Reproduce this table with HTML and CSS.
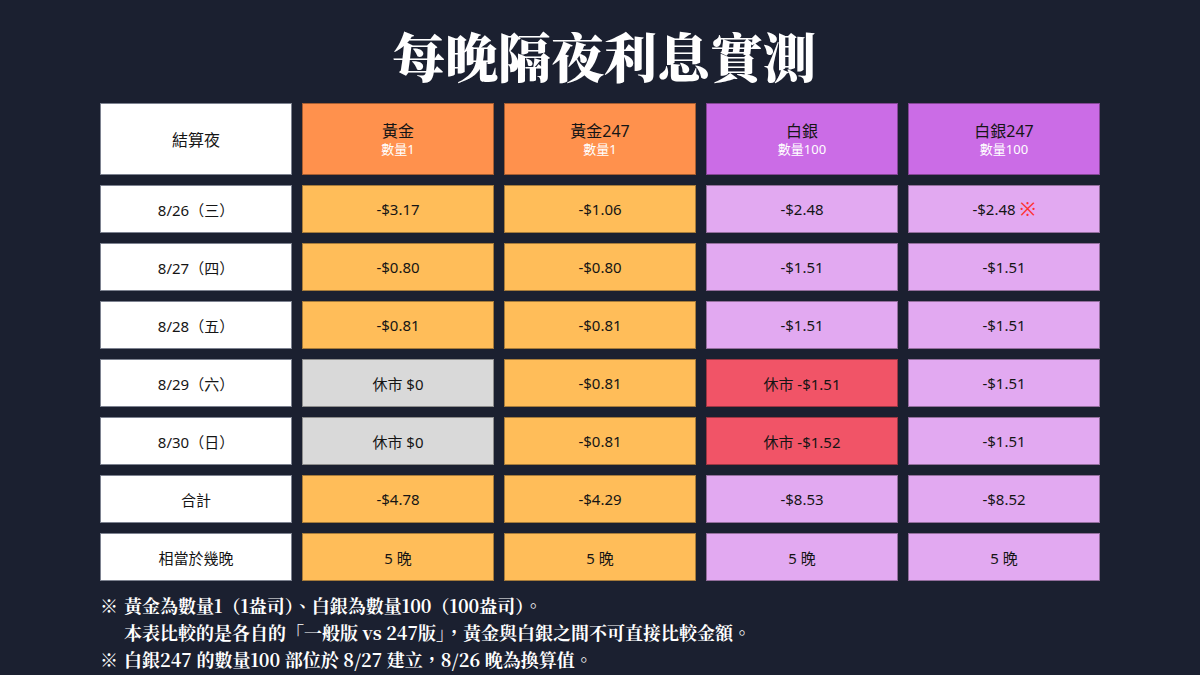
FILE: index.html
```html
<!DOCTYPE html>
<html lang="zh-Hant">
<head>
<meta charset="utf-8">
<title>每晚隔夜利息實測</title>
<link rel="stylesheet" href="styles.css">
</head>
<body>
<div class="page">
  <h1 class="title">每晚隔夜利息實測</h1>
  <div class="table">
    <div class="cell head label">結算夜</div>
    <div class="cell head gold-h"><span class="hname">黃金</span><span class="hsub">數量1</span></div>
    <div class="cell head gold-h"><span class="hname">黃金247</span><span class="hsub">數量1</span></div>
    <div class="cell head silver-h"><span class="hname">白銀</span><span class="hsub">數量100</span></div>
    <div class="cell head silver-h"><span class="hname">白銀247</span><span class="hsub">數量100</span></div>

    <div class="cell label">8/26（三）</div>
    <div class="cell gold">-$3.17</div>
    <div class="cell gold">-$1.06</div>
    <div class="cell silver">-$2.48</div>
    <div class="cell silver">-$2.48<span class="mark">※</span></div>

    <div class="cell label">8/27（四）</div>
    <div class="cell gold">-$0.80</div>
    <div class="cell gold">-$0.80</div>
    <div class="cell silver">-$1.51</div>
    <div class="cell silver">-$1.51</div>

    <div class="cell label">8/28（五）</div>
    <div class="cell gold">-$0.81</div>
    <div class="cell gold">-$0.81</div>
    <div class="cell silver">-$1.51</div>
    <div class="cell silver">-$1.51</div>

    <div class="cell label">8/29（六）</div>
    <div class="cell closed">休市 $0</div>
    <div class="cell gold">-$0.81</div>
    <div class="cell red">休市 -$1.51</div>
    <div class="cell silver">-$1.51</div>

    <div class="cell label">8/30（日）</div>
    <div class="cell closed">休市 $0</div>
    <div class="cell gold">-$0.81</div>
    <div class="cell red">休市 -$1.52</div>
    <div class="cell silver">-$1.51</div>

    <div class="cell label">合計</div>
    <div class="cell gold">-$4.78</div>
    <div class="cell gold">-$4.29</div>
    <div class="cell silver">-$8.53</div>
    <div class="cell silver">-$8.52</div>

    <div class="cell label">相當於幾晚</div>
    <div class="cell gold">5 晚</div>
    <div class="cell gold">5 晚</div>
    <div class="cell silver">5 晚</div>
    <div class="cell silver">5 晚</div>
  </div>
  <div class="notes">
    <p class="note"><span class="star">※</span><span>黃金為數量1（1盎司）、白銀為數量100（100盎司）。<br>本表比較的是各自的「一般版 vs 247版」，黃金與白銀之間不可直接比較金額。</span></p>
    <p class="note"><span class="star">※</span><span>白銀247 的數量100 部位於 8/27 建立，8/26 晚為換算值。</span></p>
  </div>
</div>
</body>
</html>
```

FILE: styles.css
```css
* { box-sizing: border-box; }
html, body {
  margin: 0;
  padding: 0;
}
body {
  width: 1200px;
  height: 675px;
  overflow: hidden;
  background: #1b2030;
  font-family: "Noto Sans", "Noto Sans CJK TC", sans-serif;
  color: #111;
}
.page {
  padding: 22px 100px 0 100px;
}
.title {
  margin: 0;
  height: 81px;
  padding-left: 8px;
  text-align: center;
  color: #ffffff;
  font-family: "Noto Serif CJK TC", "Noto Sans CJK TC", serif;
  font-weight: 900;
  font-size: 53px;
  line-height: 66px;
}
.table {
  display: grid;
  grid-template-columns: repeat(5, 192px);
  grid-template-rows: 72px repeat(7, 48px);
  gap: 10px;
}
.cell {
  display: flex;
  align-items: center;
  justify-content: center;
  font-size: 15px;
  border: 1px solid rgba(0, 0, 0, 0.35);
  color: #151515;
}
.head {
  flex-direction: column;
}
.hname {
  font-size: 16px;
  line-height: 20px;
}
.hsub {
  font-size: 13px;
  line-height: 17px;
  color: #ffffff;
}
.label {
  background: #ffffff;
  border-color: #7d8290;
}
.head.label {
  font-size: 16px;
}
.gold-h { background: #ff914d; }
.silver-h { background: #cb6ce6; }
.gold { background: #ffbd59; }
.silver { background: #e2a9f1; }
.closed { background: #d9d9d9; }
.red { background: #f15467; }
.mark {
  color: #ff3131;
  font-size: 19px;
  margin-left: 4px;
  line-height: 1;
}
.notes {
  margin-top: 11px;
  color: #ffffff;
  font-family: "Noto Serif CJK TC", "Liberation Serif", "Noto Sans CJK TC", serif;
  font-weight: 700;
  font-size: 18px;
  line-height: 27px;
}
.note {
  margin: 0;
  display: flex;
}
.star {
  width: 24px;
  flex: none;
}
```
